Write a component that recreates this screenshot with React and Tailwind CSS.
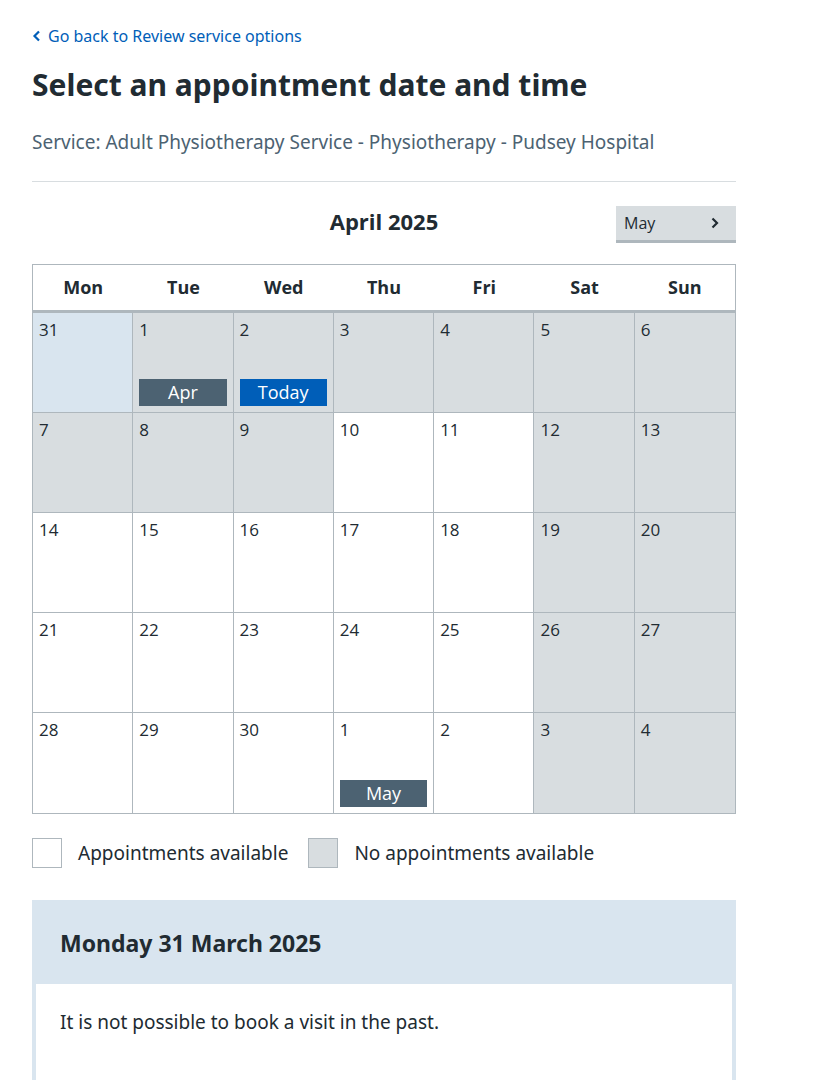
import React from 'react';

const weekDays = ['Mon', 'Tue', 'Wed', 'Thu', 'Fri', 'Sat', 'Sun'];

// each cell: day number, state and optional badge
const weeks = [
    [
        { d: 31, kind: 'selected' },
        { d: 1, kind: 'none', badge: 'Apr' },
        { d: 2, kind: 'none', badge: 'Today', today: true },
        { d: 3, kind: 'none' },
        { d: 4, kind: 'none' },
        { d: 5, kind: 'none' },
        { d: 6, kind: 'none' },
    ],
    [
        { d: 7, kind: 'none' },
        { d: 8, kind: 'none' },
        { d: 9, kind: 'none' },
        { d: 10, kind: 'open' },
        { d: 11, kind: 'open' },
        { d: 12, kind: 'none' },
        { d: 13, kind: 'none' },
    ],
    [
        { d: 14, kind: 'open' },
        { d: 15, kind: 'open' },
        { d: 16, kind: 'open' },
        { d: 17, kind: 'open' },
        { d: 18, kind: 'open' },
        { d: 19, kind: 'none' },
        { d: 20, kind: 'none' },
    ],
    [
        { d: 21, kind: 'open' },
        { d: 22, kind: 'open' },
        { d: 23, kind: 'open' },
        { d: 24, kind: 'open' },
        { d: 25, kind: 'open' },
        { d: 26, kind: 'none' },
        { d: 27, kind: 'none' },
    ],
    [
        { d: 28, kind: 'open' },
        { d: 29, kind: 'open' },
        { d: 30, kind: 'open' },
        { d: 1, kind: 'open', badge: 'May' },
        { d: 2, kind: 'open' },
        { d: 3, kind: 'none' },
        { d: 4, kind: 'none' },
    ],
];

const cellBg = {
    selected: 'bg-[#d9e5ef]',
    none: 'bg-[#d8dde0]',
    open: 'bg-white',
};

const DayCell = ({ cell }) => (
    <div className={`h-[100px] border-r border-b border-[#aeb7bd] last:border-r-0 px-[6px] pt-[5px] flex flex-col ${cellBg[cell.kind]}`}>
        <span className="text-[17px] leading-[24px] text-[#212b32]">{cell.d}</span>
        {cell.badge && (
            <span
                className={`mt-auto mb-[6px] h-[27px] flex items-center justify-center text-[18px] text-white ${cell.today ? 'bg-[#005eb8]' : 'bg-[#4c6272]'}`}
            >
                {cell.badge}
            </span>
        )}
    </div>
);

export default function App() {
    return (
        <div className="min-h-screen bg-white text-[#212b32] font-['Noto_Sans',sans-serif]">
            <div className="w-[704px] ml-[32px] pt-[24px]">
                <a href="#" className="flex items-center gap-[6px] text-[16px] leading-[24px] text-[#005eb8]">
                    <svg width="10" height="12" viewBox="0 0 10 12" fill="none" stroke="currentColor" strokeWidth="2.2">
                        <path d="M7 1.5 2.5 6 7 10.5" />
                    </svg>
                    Go back to Review service options
                </a>

                <h1 className="mt-[19px] text-[30px] leading-[36px] font-bold">Select an appointment date and time</h1>

                <p className="mt-[25px] text-[19px] leading-[28px] text-[#4c6272]">
                    Service: Adult Physiotherapy Service - Physiotherapy - Pudsey Hospital
                </p>

                <hr className="mt-[25px] border-0 border-t border-[#d8dde0]" />

                {/* month switcher */}
                <div className="mt-[24px] relative flex items-center justify-center h-[36px] font-['Open_Sans',sans-serif]">
                    <h2 className="text-[22px] font-bold -mt-[6px]">April 2025</h2>
                    <button className="absolute right-0 top-0 w-[120px] h-[37px] bg-[#d8dde0] border-b-[3px] border-[#aeb7bd] flex items-center justify-between pl-[8px] pr-[16px] text-[16px]">
                        May
                        <svg width="10" height="14" viewBox="0 0 10 14" fill="none" stroke="#212b32" strokeWidth="2.2">
                            <path d="M2.5 2.5 7 7l-4.5 4.5" />
                        </svg>
                    </button>
                </div>

                {/* calendar */}
                <div className="mt-[22px] border border-[#aeb7bd] font-['Open_Sans',sans-serif]">
                    <div className="grid grid-cols-7 h-[48px] border-b-[3px] border-[#aeb7bd] bg-white">
                        {weekDays.map((w) => (
                            <div key={w} className="flex items-center justify-center text-[18px] font-bold">
                                {w}
                            </div>
                        ))}
                    </div>
                    {weeks.map((week, i) => (
                        <div key={i} className="grid grid-cols-7 [&:last-child>div]:border-b-0">
                            {week.map((cell, j) => (
                                <DayCell key={j} cell={cell} />
                            ))}
                        </div>
                    ))}
                </div>

                {/* legend */}
                <div className="mt-[24px] flex items-center text-[19px] leading-[28px]">
                    <span className="w-[30px] h-[30px] border border-[#aeb7bd] bg-white" />
                    <span className="ml-[16px]">Appointments available</span>
                    <span className="ml-[20px] w-[30px] h-[30px] border border-[#aeb7bd] bg-[#d8dde0]" />
                    <span className="ml-[16px]">No appointments available</span>
                </div>

                {/* selected day */}
                <div className="mt-[32px] bg-[#d9e5ef] px-[4px]">
                    <h3 className="px-[24px] pt-[28px] pb-[26px] text-[23px] leading-[30px] font-bold">Monday 31 March 2025</h3>
                    <div className="bg-white px-[24px] pt-[24px] pb-[48px] text-[19px] leading-[28px]">
                        It is not possible to book a visit in the past.
                    </div>
                </div>
            </div>
        </div>
    );
}
